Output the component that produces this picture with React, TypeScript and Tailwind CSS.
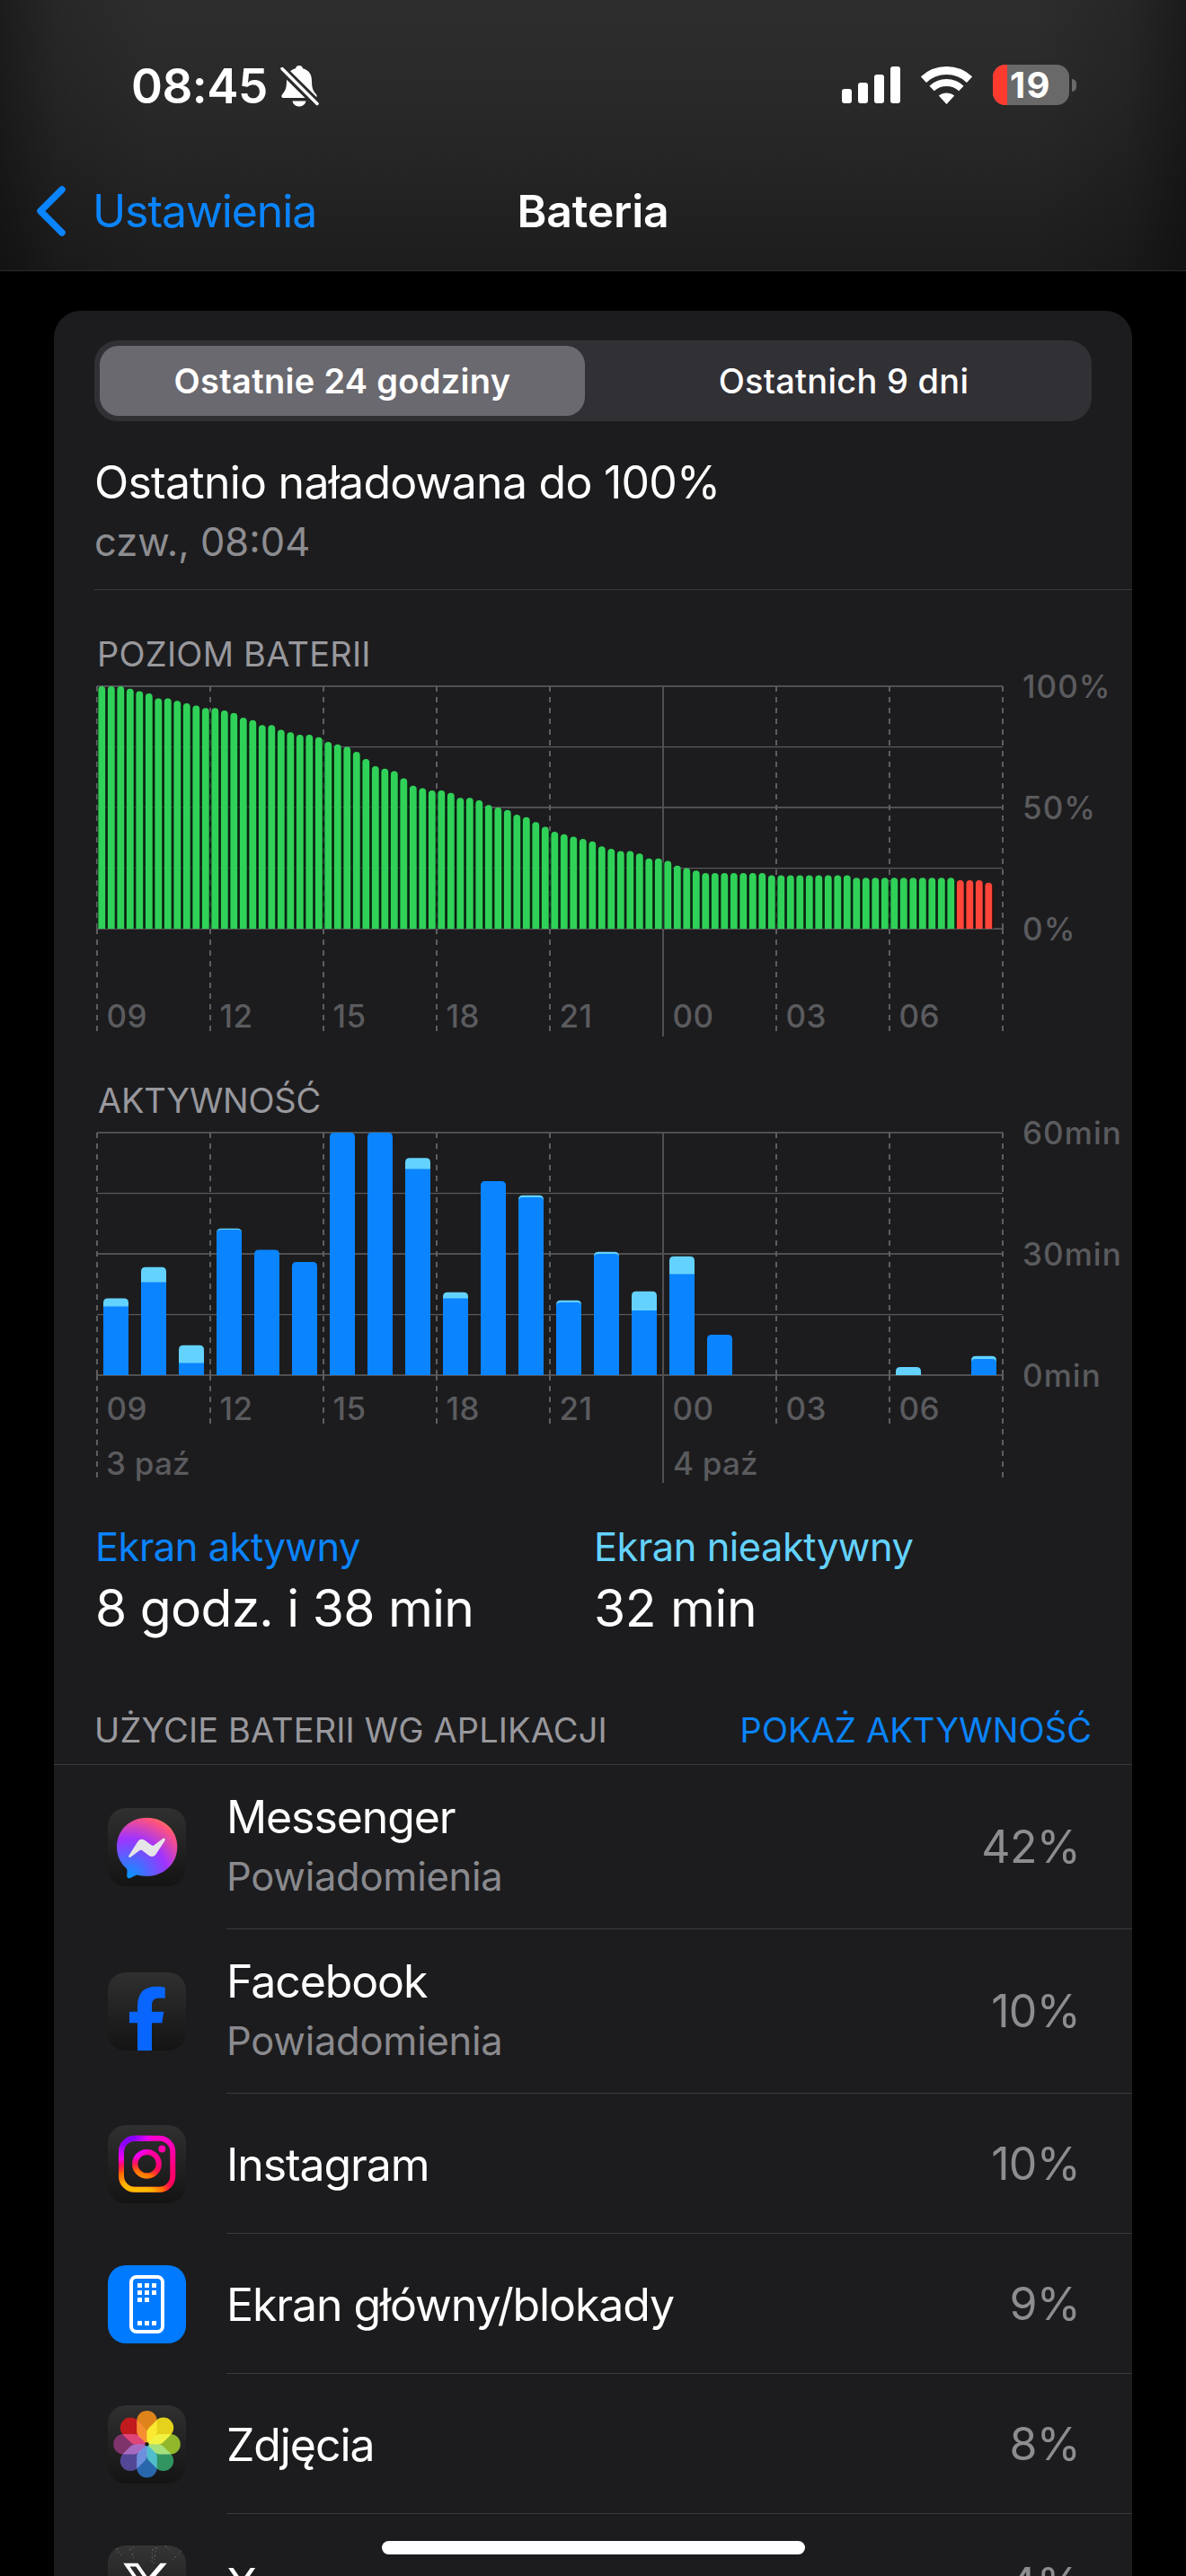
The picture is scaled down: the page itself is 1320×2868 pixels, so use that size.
import type { ReactNode } from 'react';

const batteryLevels = [
  100, 100, 100, 99, 98, 97, 95, 95, 94, 93, 92, 91,
  91, 90, 89, 87, 86, 84, 84, 82, 81, 80, 80, 79,
  77, 76, 75, 73, 70, 67, 66, 65, 62, 59, 58, 57,
  57, 56, 54, 54, 53, 51, 50, 49, 47, 46, 44, 42,
  40, 39, 38, 37, 36, 34, 33, 32, 32, 31, 29, 29,
  28, 26, 25, 24, 23, 23, 23, 23, 23, 23, 23, 22,
  22, 22, 22, 22, 22, 22, 22, 22, 21, 21, 21, 21,
  21, 21, 21, 21, 21, 21, 21, 20, 20, 20, 19,
];

// [screen on, screen off] minutes per hour, starting at 09:00
const activity: [number, number][] = [
  [17, 2], [23, 3.7], [3, 4.4], [36, 0.3], [31, 0], [28, 0],
  [60, 0], [60, 0], [51, 2.7], [19, 1.5], [48, 0], [44, 0.5],
  [18, 0.5], [30, 0.5], [16, 4.7], [25, 4.4], [10, 0], [0, 0],
  [0, 0], [0, 0], [0, 0], [0, 2], [0, 0], [4, 0.7],
];

const hours = ['09', '12', '15', '18', '21', '00', '03', '06'];

const LEFT = 48;
const RIGHT = 1056;
const STEP = 126;
const HEIGHT = 270;

function Grid({ top, labels, hourY, bottom, outerBottom, solidBottom }: {
  top: number;
  labels: string[];
  hourY: number;
  bottom: number;
  outerBottom: number;
  solidBottom: number;
}) {
  return (
    <>
      {[0, 1, 2, 3, 4].map((i) => (
        <rect key={i} x={LEFT} y={top + i * 67.5 - (i % 2 ? 0.5 : 1)} width={RIGHT - LEFT} height={i % 2 ? 1.2 : 2} fill={i % 2 ? '#5a5a5c' : '#505052'} />
      ))}
      {Array.from({ length: 9 }, (_, i) => {
        const x = LEFT + i * STEP;
        if (i === 5) {
          return <line key={i} x1={x} x2={x} y1={top} y2={solidBottom} stroke="#505052" strokeWidth="2" />;
        }
        // the dash pattern restarts below the baseline
        return (
          <path key={i} d={`M${x} ${top}V${top + HEIGHT}M${x} ${top + HEIGHT}V${i % 8 === 0 ? outerBottom : bottom}`}
            stroke="#5e5e60" strokeWidth="2" strokeDasharray="6 6" />
        );
      })}
      {hours.map((h, i) => (
        <text key={h} x={LEFT + 10.5 + i * STEP} y={hourY} fill="#5b5b5e" className="text-[35px] font-medium tracking-[0.012em]">{h}</text>
      ))}
      {labels.map((label, i) => (
        <text key={label} x="1078" y={top + i * 135 + 13} fill="#5b5b5e" className="text-[35px] font-medium tracking-[0.030em]">{label}</text>
      ))}
    </>
  );
}

function BatteryChart() {
  const top = 13;
  const base = top + HEIGHT;
  return (
    <svg width="1200" height="451" viewBox="0 0 1200 451" className="block overflow-visible">
      <Grid top={top} labels={['100%', '50%', '0%']} hourY={393} bottom={397} outerBottom={397} solidBottom={403} />
      {batteryLevels.map((level, i) => {
        const x = LEFT + i * 10.5;
        const h = level * 2.7;
        const color = level <= 20 ? '#ff453a' : '#30d158';
        return (
          <g key={i}>
            <rect x={x + 0.5} y={base - h + 4} width="10.5" height={h - 4} fill={level <= 20 ? '#2a0b09' : '#06240f'} fillOpacity="0.75" />
            <path d={`M${x + 1.4} ${base}V${base - h + 3.9}a3.9 3.9 0 0 1 7.8 0V${base}z`} fill={color} />
          </g>
        );
      })}
    </svg>
  );
}

function ActivityChart() {
  const top = 13;
  const base = top + HEIGHT;
  return (
    <svg width="1200" height="444" viewBox="0 0 1200 444" className="block overflow-visible">
      <Grid top={top} labels={['60min', '30min', '0min']} hourY={332.5} bottom={337} outerBottom={397} solidBottom={403} />
      <text x={LEFT + 10} y="393.5" fill="#5b5b5e" className="text-[35px] font-medium tracking-[0.006em]">3 paź</text>
      <text x={LEFT + 11 + 5 * STEP} y="393.5" fill="#5b5b5e" className="text-[35px] font-medium tracking-[0.006em]">4 paź</text>
      {activity.map(([on, off], i) => {
        if (on + off === 0) return null;
        const x = LEFT + 7 + i * 42;
        const h = (on + off) * 4.5;
        return (
          <g key={i}>
            <path d={`M${x} ${base}V${base - h + 5}q0 -5 5 -5h18q5 0 5 5V${base}z`} fill={off ? '#64d2ff' : '#0a84ff'} />
            {off > 0 && on > 0 && (
              off < 1
                ? <path d={`M${x} ${base}V${base - on * 4.5 + 4}q0 -4 5 -4h18q5 0 5 4V${base}z`} fill="#0a84ff" />
                : <rect x={x} y={base - on * 4.5} width="28" height={on * 4.5} fill="#0a84ff" />
            )}
          </g>
        );
      })}
    </svg>
  );
}

function Tile({ children, className }: { children: ReactNode; className?: string }) {
  return (
    <div className={`size-[87px] shrink-0 overflow-hidden rounded-[20px] ${className ?? 'bg-linear-to-b from-[#303030] to-[#141414]'}`}>
      <svg width="87" height="87" viewBox="0 0 87 87" className="isolate block">{children}</svg>
    </div>
  );
}

function MessengerIcon() {
  return (
    <Tile>
      <defs>
        <radialGradient id="msg" gradientUnits="userSpaceOnUse" cx="23" cy="78" r="74">
          <stop offset="0" stopColor="#0099ff" />
          <stop offset="0.6" stopColor="#a033ff" />
          <stop offset="0.93" stopColor="#ff5280" />
          <stop offset="1" stopColor="#ff7061" />
        </radialGradient>
      </defs>
      <path fill="url(#msg)" d="M43.5 10.7C24.5 10.7 10 24.6 10 43.2C10 53 14 61.3 20.5 67C21.2 67.7 21.5 68.5 21.5 69.5L21.3 75.8C21.3 77.8 23 78.8 24.8 78L31.5 74.8C32.2 74.5 33 74.5 33.7 74.7C36.8 75.5 40 75.8 43.5 75.8C62.5 75.8 77.3 61.8 77.3 43.2C77.3 24.6 62.5 10.7 43.5 10.7Z" />
      <path fill="#e6e6e8" d="M23.5 52.7L33.4 37.2C35.1 34.6 38.5 34 41 35.8L48.8 41.6C49.6 42.2 50.5 42.2 51.3 41.6L61.3 34C62.9 32.8 64.5 34.6 63.5 36.2L53.5 51.5C51.9 54.2 48.4 54.8 45.9 52.9L38 47.1C37.3 46.6 36.3 46.6 35.6 47.1L25.5 54.6C24 55.7 22.4 54.3 23.5 52.7Z" />
    </Tile>
  );
}

function FacebookIcon() {
  return (
    <Tile>
      <path fill="#0866ff" d="M33 87V56.3H24V43.7H33V38C33 23 40 15.7 54 15.7C58 15.7 61.5 16 63.7 16.8V28.7C61.5 28.5 59.5 28.4 57.5 28.4C51 28.4 49 31.5 49 36.8V43.7H62.3L60.3 56.3H49V87Z" />
    </Tile>
  );
}

function InstagramIcon() {
  const shape = (
    <>
      <rect x="15" y="14.7" width="57.3" height="57" rx="15" />
      <circle cx="43.5" cy="43.2" r="13.3" />
      <circle cx="60.3" cy="26.5" r="2" strokeWidth="4" />
    </>
  );
  return (
    <Tile>
      <defs>
        <linearGradient id="igBase" gradientUnits="userSpaceOnUse" x1="0" y1="12" x2="0" y2="75">
          <stop offset="0" stopColor="#ff00d0" />
          <stop offset="0.6" stopColor="#ff0072" />
          <stop offset="1" stopColor="#ff0058" />
        </linearGradient>
        <radialGradient id="igPurple" gradientUnits="userSpaceOnUse" cx="20" cy="12" r="34">
          <stop offset="0" stopColor="#7a00ff" />
          <stop offset="0.3" stopColor="#8c00ff" />
          <stop offset="0.75" stopColor="#f000f0" />
          <stop offset="1" stopColor="#ff00d0" stopOpacity="0" />
        </radialGradient>
        <radialGradient id="igYellow" gradientUnits="userSpaceOnUse" cx="30" cy="84" r="48">
          <stop offset="0" stopColor="#ffc800" />
          <stop offset="0.45" stopColor="#ffb400" />
          <stop offset="0.7" stopColor="#ff6a00" />
          <stop offset="1" stopColor="#ff0040" stopOpacity="0" />
        </radialGradient>
      </defs>
      <g fill="none" strokeWidth="6" stroke="url(#igBase)">{shape}</g>
      <g fill="none" strokeWidth="6" stroke="url(#igPurple)">{shape}</g>
      <g fill="none" strokeWidth="6" stroke="url(#igYellow)">{shape}</g>
    </Tile>
  );
}

function HomeScreenIcon() {
  const dots = [
    [33, 20], [41, 20], [49, 20],
    [33, 28], [41, 28], [49, 28],
    [33, 36], [41, 36],
    [33, 62], [41, 62], [49, 62],
  ];
  return (
    <Tile className="bg-[#007aff]">
      <rect x="26" y="13" width="35" height="61" rx="6" fill="none" stroke="#fff" strokeWidth="4" />
      {dots.map(([x, y]) => (
        <rect key={`${x}-${y}`} x={x} y={y} width="5" height="5" rx="0.5" fill="#fff" />
      ))}
    </Tile>
  );
}

function PhotosIcon() {
  const petals = ['#e8891a', '#eedb1c', '#98c02c', '#339c66', '#2a6cb4', '#554a9c', '#84356f', '#c8191c'];
  return (
    <Tile>
      {petals.map((color, i) => (
        <path key={color} fill={color} fillOpacity="0.95" className="mix-blend-screen" transform={`rotate(${i * 45} 43.5 43.3)`}
          d="M43.5 43.3L34.5 34.5Q32.2 32 32.2 29V17.3a11.3 11.3 0 0 1 22.6 0V29Q54.8 32 52.5 34.5Z" />
      ))}
      <circle cx="43.5" cy="43.3" r="2.2" fill="#1a1a1a" />
    </Tile>
  );
}

function XIcon() {
  return (
    <Tile className="bg-linear-to-b from-[#353535] to-[#141414]">
      <g stroke="#8a8a8a" strokeWidth="1" strokeOpacity="0.7" strokeDasharray="2 2.5 1 3">
        <path d="M10 3l5 8M27 9l2 5M54 2l-3 18M50 4l-1 14M64 0l5 6M82 6l-12 12M24 5l6-4" />
      </g>
      <path fill="#fff" fillRule="evenodd" d="M17.3 19.7H33.5L66.5 67.5H50.5ZM24.5 23.5L52.5 63.5H59.3L31.3 23.5Z" />
      <path fill="#fff" d="M58.5 19.7H65.7L46.8 41.7L43.6 37.2ZM37.3 45.8L40.5 50.3L25 67.5H18.8Z" />
    </Tile>
  );
}

const apps = [
  { name: 'Messenger', detail: 'Powiadomienia', usage: '42%', icon: <MessengerIcon /> },
  { name: 'Facebook', detail: 'Powiadomienia', usage: '10%', icon: <FacebookIcon /> },
  { name: 'Instagram', usage: '10%', icon: <InstagramIcon /> },
  { name: 'Ekran główny/blokady', usage: '9%', icon: <HomeScreenIcon /> },
  { name: 'Zdjęcia', usage: '8%', icon: <PhotosIcon /> },
  { name: 'X', usage: '4%', icon: <XIcon /> },
];

function StatusBar() {
  return (
    <div className="flex h-[192px] items-center pl-[146px] pr-[122px]">
      <span className="w-[166px] text-[53px] font-semibold leading-none tracking-[-0.010em]">08:45</span>
      <svg width="44" height="48" viewBox="0 0 44 48">
        <path fill="#fff" d="M21 1C23.6 1 24.7 2.5 25 4.2C32 6 35 11 35 18C35 27 37 29.5 39.5 32.5C41.5 35 40.8 37 38 37H4C1.2 37 .5 35 2.5 32.5C5 29.5 7 27 7 18C7 11 10 6 17 4.2C17.3 2.5 18.4 1 21 1ZM13.5 40.5H28.5C27.8 44 25 46.5 21 46.5C17 46.5 14.2 44 13.5 40.5Z" />
        <path d="M1.5 4.5L41.5 44" stroke="#2a2a2b" strokeWidth="9.5" />
        <path d="M2 4.5L41 43.5" stroke="#fff" strokeWidth="3.5" strokeLinecap="round" />
      </svg>
      <div className="ml-auto flex items-center gap-[23px] pb-[3px]">
        <div className="flex h-[41px] w-[65px] items-end gap-[7px]">
          <div className="h-[16px] w-[11px] rounded-[3px] bg-white" />
          <div className="h-[23px] w-[11px] rounded-[3px] bg-white" />
          <div className="h-[32px] w-[11px] rounded-[3px] bg-white" />
          <div className="h-[41px] w-[11px] rounded-[3px] bg-white" />
        </div>
        <svg width="57" height="42" viewBox="0 0 57 42" fill="none" stroke="#fff">
          <path d="M2.9 14.6A37.5 37.5 0 0 1 54.1 14.6" strokeWidth="9" />
          <path d="M12.1 24.5A24 24 0 0 1 44.9 24.5" strokeWidth="7.8" />
          <path d="M28.5 42L19.8 32.6A13.5 13.5 0 0 1 37.2 32.6Z" fill="#fff" stroke="none" />
        </svg>
        <div className="flex items-center gap-[3px]">
          <div className="flex h-[45px] w-[85px] items-center rounded-[14px] bg-[#69696a]">
            <div className="h-full w-[16px] rounded-l-[14px] bg-[#ff3b30]" />
            <span className="pl-[3px] text-[40px] font-bold leading-none tracking-[0.030em]">19</span>
          </div>
          <div className="h-[14px] w-[5px] rounded-r-full bg-[#69696a]" />
        </div>
      </div>
    </div>
  );
}

export default function App() {
  return (
    <div className="relative h-[2868px] w-[1320px] overflow-hidden bg-black font-['Inter',sans-serif] text-white">
      <header className="h-[302px] border-b border-[#2b2b2b] bg-[linear-gradient(90deg,rgba(0,0,0,0.38),rgba(0,0,0,0.12)_5%,transparent_13%,transparent_87%,rgba(0,0,0,0.14)_95%,rgba(0,0,0,0.4)),linear-gradient(180deg,#2d2d2e,#2a2a2b_30%,#262627_55%,#1d1d1d)]">
        <StatusBar />
        <div className="grid h-[86px] grid-cols-[1fr_auto_1fr] items-center text-[50px] leading-none">
          <div className="flex items-center pl-[39px] text-[#0a84ff]">
            <svg width="36" height="58" viewBox="0 0 36 58" fill="none">
              <path d="M30 5L6 29L30 53" stroke="currentColor" strokeWidth="7.5" strokeLinecap="round" strokeLinejoin="round" />
            </svg>
            <span className="pl-[28px] tracking-[-0.022em]">Ustawienia</span>
          </div>
          <h1 className="font-semibold tracking-[-0.004em]">Bateria</h1>
        </div>
      </header>

      <main className="mx-[60px] mt-[44px] rounded-t-[30px] bg-[#1c1c1e] pt-[33px]">
        <div className="mx-[45px] flex h-[90px] rounded-[26px] bg-[#313035] p-[6px] text-[38px] leading-none">
          <button className="w-[540px] rounded-[21px] bg-[#6a696f] font-[560] tracking-[0.008em]">Ostatnie 24 godziny</button>
          <button className="flex-1 pl-[18px] font-medium tracking-[0.007em]">Ostatnich 9 dni</button>
        </div>

        <div className="ml-[45px] mt-[35px] border-b border-[#3a3a3c] pb-[20px]">
          <p className="text-[50px] leading-[66px] tracking-[-0.015em]">Ostatnio naładowana do 100%</p>
          <p className="text-[43.5px] leading-[66px] text-[#8d8d91]">czw., 08:04</p>
        </div>

        <h2 className="mt-[48px] pl-[48px] text-[38px] leading-[46px] tracking-[0.006em] text-[#98989d]">POZIOM BATERII</h2>
        <BatteryChart />
        <h2 className="pl-[49px] text-[38px] leading-[46px] tracking-[-0.006em] text-[#98989d]">AKTYWNOŚĆ</h2>
        <ActivityChart />

        <div className="grid grid-cols-[555px_1fr] pl-[46px]">
          <div>
            <p className="text-[43.5px] leading-[60px] tracking-[-0.012em] text-[#0a84ff]">Ekran aktywny</p>
            <p className="text-[57px] leading-[78px] tracking-[-0.013em]">8 godz. i 38 min</p>
          </div>
          <div>
            <p className="text-[43.5px] leading-[60px] tracking-[-0.012em] text-[#64d2ff]">Ekran nieaktywny</p>
            <p className="text-[57px] leading-[78px] tracking-[-0.006em]">32 min</p>
          </div>
        </div>

        <div className="mt-[73px] flex justify-between border-b border-[#3a3a3c] px-[45px] pb-[15px] text-[38px] leading-[46px] tracking-[0.003em]">
          <h2 className="text-[#98989d]">UŻYCIE BATERII WG APLIKACJI</h2>
          <button className="text-[#0a84ff]">POKAŻ AKTYWNOŚĆ</button>
        </div>

        {apps.map((app) => (
          <div key={app.name} className={`flex items-center gap-[45px] pl-[60px] ${app.detail ? 'h-[183px]' : 'h-[156px]'}`}>
            {app.icon}
            <div className="flex flex-1 items-center justify-between self-stretch border-b border-[#3a3a3c] pr-[58px]">
              <div className={app.detail ? '' : 'pt-[2px]'}>
                <p className="text-[50px] leading-[66px] tracking-[-0.022em]">{app.name}</p>
                {app.detail && <p className="text-[43.5px] leading-[66px] tracking-[-0.006em] text-[#8a8a8e]">{app.detail}</p>}
              </div>
              <span className="text-[50px] leading-[66px] tracking-[-0.015em] text-[#8d8d91]">{app.usage}</span>
            </div>
          </div>
        ))}
      </main>

      <div className="absolute bottom-[24px] left-[425px] h-[15px] w-[471px] rounded-full bg-white" />
    </div>
  );
}
